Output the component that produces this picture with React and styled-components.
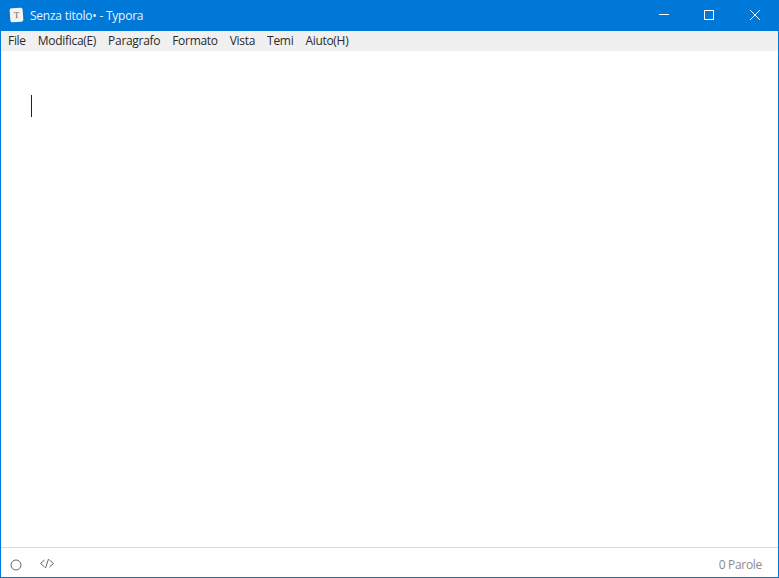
import React from 'react';
import styled, { createGlobalStyle } from 'styled-components';

const Global = createGlobalStyle`
  html, body { margin: 0; padding: 0; background: #fff; }
  body { font-family: "Open Sans", "Noto Sans", sans-serif; }
`;

const Finestra = styled.div`
  width: 779px;
  height: 578px;
  box-sizing: border-box;
  border: 1px solid #0078d7;
  border-top: 0;
  display: flex;
  flex-direction: column;
  overflow: hidden;
`;

const BarraTitolo = styled.div`
  height: 31px;
  margin: 0 -1px;
  padding-right: 1px;
  background: #0078d7;
  display: flex;
  align-items: flex-start;
  color: #fff;
`;

const Logo = styled.div`
  width: 13px;
  height: 14px;
  margin: 8px 7px 0 10px;
  background: #f4f2ee;
  border-radius: 2px;
  transform: rotate(-4deg);
  color: #6b6b6b;
  font: 9px "Liberation Serif", serif;
  display: flex;
  align-items: center;
  justify-content: center;
`;

const Titolo = styled.div`
  flex: 1;
  font-size: 12px;
  line-height: 31px;
  letter-spacing: -0.24px;
  color: #e8f3fc;
`;

const BottoneFinestra = styled.div`
  width: 46px;
  height: 30px;
  display: flex;
  align-items: center;
  justify-content: center;
`;

const Menu = styled.div`
  height: 20px;
  background: #f0f0f0;
  display: flex;
  align-items: center;
  padding-left: 7px;
  gap: 12px;
`;

const VoceMenu = styled.div`
  font-size: 12px;
  line-height: 19px;
  margin-bottom: 1px;
  letter-spacing: -0.3px;
  color: #2b2b2b;
`;

const Editor = styled.div`
  flex: 1;
  padding: 44px 0 0 30px;
`;

const Cursore = styled.div`
  width: 1px;
  height: 22px;
  background: #222;
`;

const BarraStato = styled.div`
  height: 24px;
  border-top: 1px solid #dcdcdc;
  display: flex;
  align-items: center;
  padding: 5px 16px 0 9px;
  gap: 17px;
`;

const Parole = styled.div`
  margin-left: auto;
  margin-bottom: 2px;
  font-size: 12px;
  letter-spacing: -0.3px;
  color: #8a8a8a;
`;

const voci = ['File', 'Modifica(E)', 'Paragrafo', 'Formato', 'Vista', 'Temi', 'Aiuto(H)'];

export default function App() {
  return (
    <Finestra>
      <Global />
      <BarraTitolo>
        <Logo>T</Logo>
        <Titolo>Senza titolo• - Typora</Titolo>
        <BottoneFinestra>
          <svg width="12" height="12" viewBox="0 0 12 12"><path d="M2 5.5h10" stroke="#fff" fill="none" /></svg>
        </BottoneFinestra>
        <BottoneFinestra>
          <svg width="10" height="10" viewBox="0 0 10 10"><rect x="0.5" y="0.5" width="9" height="9" stroke="#fff" fill="none" /></svg>
        </BottoneFinestra>
        <BottoneFinestra>
          <svg width="10" height="10" viewBox="0 0 10 10"><path d="M0 0l10 10M10 0L0 10" stroke="#fff" fill="none" /></svg>
        </BottoneFinestra>
      </BarraTitolo>
      <Menu>
        {voci.map((v) => <VoceMenu key={v}>{v}</VoceMenu>)}
      </Menu>
      <Editor>
        <Cursore />
      </Editor>
      <BarraStato>
        <svg width="12" height="12" viewBox="0 0 12 12"><circle cx="6" cy="6" r="5" stroke="#666" fill="none" /></svg>
        <svg width="16" height="12" viewBox="0 0 16 12">
          <path d="M5.5 1L1.5 4.5l4 3.5M10.5 1l4 3.5-4 3.5M9.5 0L6.5 9" stroke="#666" fill="none" />
        </svg>
        <Parole>0 Parole</Parole>
      </BarraStato>
    </Finestra>
  );
}
